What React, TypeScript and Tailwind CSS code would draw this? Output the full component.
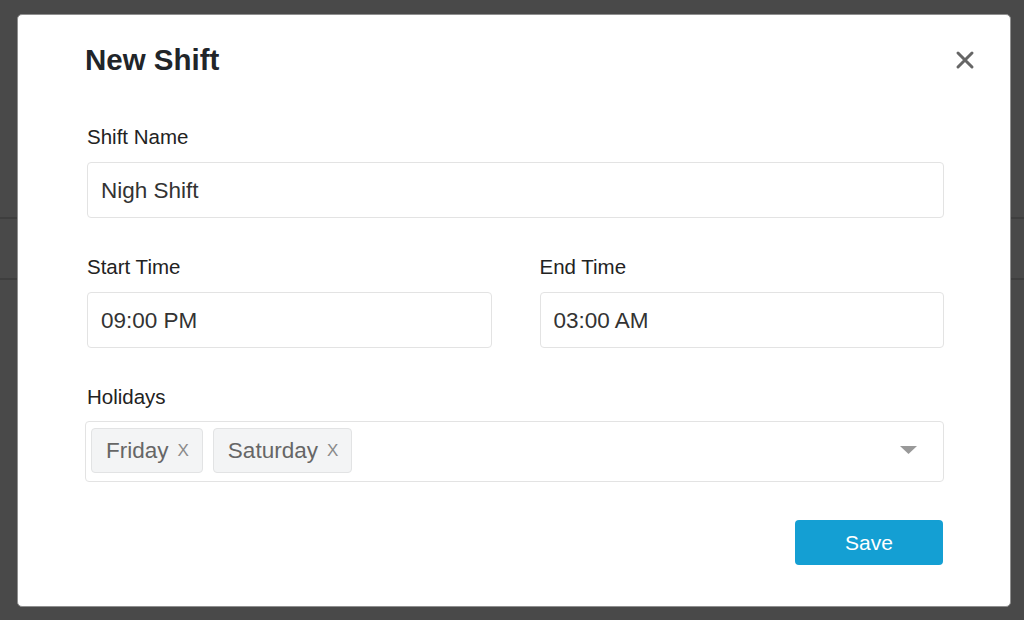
import React from 'react';

const font = { fontFamily: '"Liberation Sans", Arial, Helvetica, sans-serif' };

function Field({ label, value }: { label: string; value: string }) {
  return (
    <div className="flex flex-col">
      <label className="text-[20.5px] leading-[24px] text-[#222] mb-[13px]">{label}</label>
      <div className="h-[56px] border border-[#e3e3e3] rounded-[4px] flex items-center pt-[2px] px-[13px] text-[22.5px] text-[#333]">
        {value}
      </div>
    </div>
  );
}

function Tag({ text }: { text: string }) {
  return (
    <div className="h-[45px] flex items-center pl-[14px] pr-[13px] bg-[#f3f4f5] border border-[#e2e3e4] rounded-[4px] text-[22.5px] text-[#666]">
      <span>{text}</span>
      <span className="ml-[9px] text-[17px] text-[#8a8a8a] font-light">X</span>
    </div>
  );
}

export default function App() {
  return (
    <div className="relative h-[620px] w-[1024px] bg-[#494949] overflow-hidden" style={font}>
      {/* page underneath the overlay */}
      <div className="h-[217px]" />
      <div className="h-[2px] bg-[#3e3e3e]" />
      <div className="h-[59px]" />
      <div className="h-[2px] bg-[#3e3e3e]" />

      {/* modal */}
      <div className="absolute left-[17px] top-[14px] w-[994px] h-[593px] bg-white border border-[#8f8f8f] rounded-[5px]">
        <div className="flex items-center justify-between pt-[28px] pl-[67px] pr-[35px]">
          <h2 className="text-[29.5px] leading-[34px] font-bold text-[#212529]">New Shift</h2>
          <svg width="20" height="20" viewBox="0 0 20 20">
            <path d="M3 3 L17 17 M17 3 L3 17" stroke="#666" strokeWidth="3" strokeLinecap="round" />
          </svg>
        </div>

        <div className="pl-[69px] pr-[66px] pt-[48px]">
          <Field label="Shift Name" value="Nigh Shift" />

          <div className="grid grid-cols-2 gap-[48px] mt-[37px]">
            <Field label="Start Time" value="09:00 PM" />
            <Field label="End Time" value="03:00 AM" />
          </div>

          <div className="flex flex-col mt-[37px] -ml-[2px]">
            <label className="text-[20.5px] leading-[24px] text-[#222] mb-[12px] ml-[2px]">Holidays</label>
            <div className="h-[61px] border border-[#e3e3e3] rounded-[4px] flex items-start pt-[6px] pl-[5px] pr-[26px]">
              <div className="flex gap-[10px]">
                <Tag text="Friday" />
                <Tag text="Saturday" />
              </div>
              <div className="ml-auto mt-[18px]">
                <svg width="17" height="8" viewBox="0 0 17 8">
                  <path d="M0 0 L17 0 L8.5 8 Z" fill="#999" />
                </svg>
              </div>
            </div>
          </div>

          <div className="flex justify-end mt-[38px] pr-[1px]">
            <button className="w-[148px] h-[45px] rounded-[4px] bg-[#149fd3] text-white text-[21px]">
              Save
            </button>
          </div>
        </div>
      </div>
    </div>
  );
}
